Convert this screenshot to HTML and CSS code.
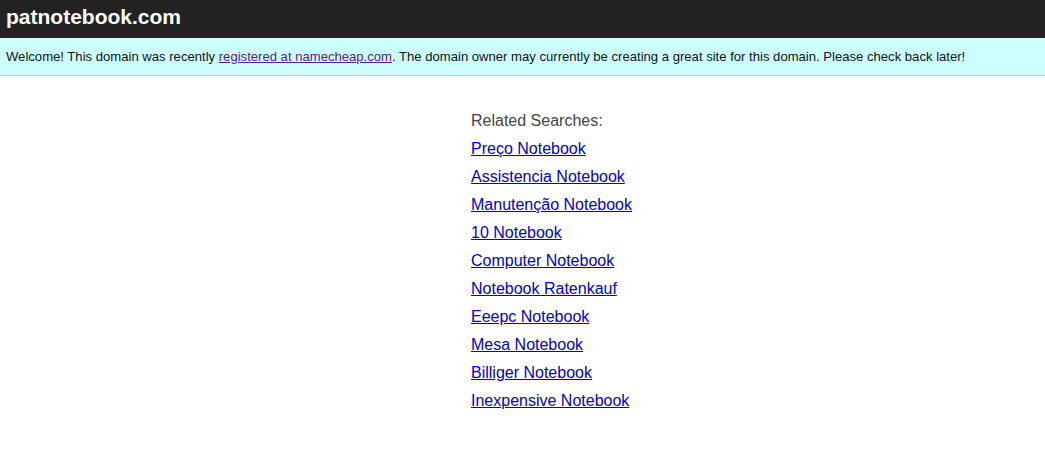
FILE: index.html
```html
<!DOCTYPE html>
<html>
<head>
<meta charset="utf-8">
<link rel="stylesheet" href="styles.css">
</head>
<body>
<div class="header">patnotebook.com</div>
<div class="notice">Welcome! This domain was recently <a href="#">registered at namecheap.com</a>. The domain owner may currently be creating a great site for this domain. Please check back later!</div>
<div class="main">
  <div class="related">
    <div class="title">Related Searches:</div>
    <a href="#">Preço Notebook</a>
    <a href="#">Assistencia Notebook</a>
    <a href="#">Manutenção Notebook</a>
    <a href="#">10 Notebook</a>
    <a href="#">Computer Notebook</a>
    <a href="#">Notebook Ratenkauf</a>
    <a href="#">Eeepc Notebook</a>
    <a href="#">Mesa Notebook</a>
    <a href="#">Billiger Notebook</a>
    <a href="#">Inexpensive Notebook</a>
  </div>
</div>
</body>
</html>
```

FILE: styles.css
```css
html, body {
  margin: 0;
  padding: 0;
  background: #fff;
  font-family: "Liberation Sans", Arial, sans-serif;
}
.header {
  background: #222222;
  color: #fff;
  font-weight: bold;
  font-size: 21px;
  height: 38px;
  line-height: 34px;
  padding-left: 6px;
}
.notice {
  background: #ccffff;
  color: #111;
  font-size: 13.1px;
  height: 37px;
  line-height: 37px;
  padding-left: 6px;
  border-bottom: 1px solid #c4c4c4;
}
.notice a {
  color: #551a8b;
}
.main {
  display: flex;
  justify-content: center;
  padding-top: 31px;
}
.related {
  display: flex;
  flex-direction: column;
  width: 103px;
  white-space: nowrap;
  font-size: 16px;
  line-height: 28px;
}
.related .title {
  color: #444;
}
.related a {
  color: #0000cc;
  align-self: flex-start;
}
```
